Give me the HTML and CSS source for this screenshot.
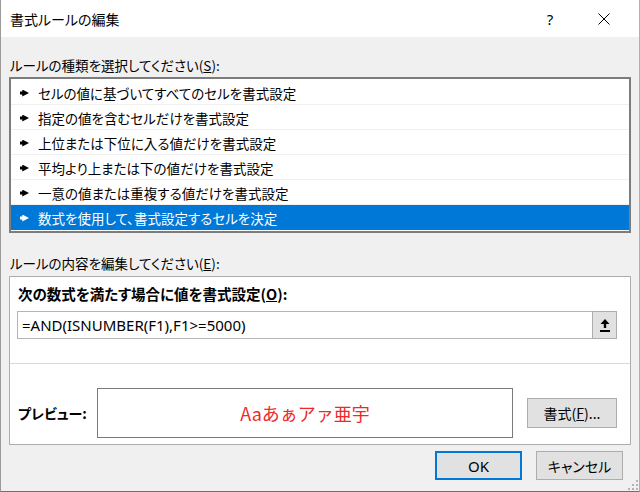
FILE: index.html
```html
<!DOCTYPE html>
<html lang="ja">
<head>
    <meta charset="UTF-8">
    <title>書式ルールの編集</title>
    <link rel="stylesheet" href="styles.css">
</head>
<body>

<div class="dialog">
    <div class="titlebar">
        <span class="title">書式ルールの編集</span>
        <span class="help">?</span>
        <span class="close">
            <svg width="12" height="12" viewBox="0 0 12 12"><path d="M0.5 0.5L11.5 11.5M11.5 0.5L0.5 11.5" stroke="#000" stroke-width="1"/></svg>
        </span>
    </div>

    <div class="content">
        <div class="label">ルールの種類を選択してください(<u>S</u>):</div>
        <ul class="rule-list">
            <li><i class="pointer"></i>セルの値に基づいてすべてのセルを書式設定</li>
            <li><i class="pointer"></i>指定の値を含むセルだけを書式設定</li>
            <li><i class="pointer"></i>上位または下位に入る値だけを書式設定</li>
            <li><i class="pointer"></i>平均より上または下の値だけを書式設定</li>
            <li><i class="pointer"></i>一意の値または重複する値だけを書式設定</li>
            <li class="selected"><i class="pointer"></i>数式を使用して、書式設定するセルを決定</li>
        </ul>

        <div class="label label-edit">ルールの内容を編集してください(<u>E</u>):</div>
        <div class="panel">
            <div class="panel-top">
                <div class="panel-title">次の数式を満たす場合に値を書式設定(<u>O</u>):</div>
                <div class="formula">
                    <div class="formula-text">=AND(ISNUMBER(F1),F1&gt;=5000)</div>
                    <button class="collapse">
                        <svg width="10" height="13" viewBox="0 0 10 13"><path d="M5 0L9.5 5H6.2V9H3.8V5H0.5Z" fill="#000"/><rect x="0" y="11" width="10" height="2" fill="#000"/></svg>
                    </button>
                </div>
            </div>
            <div class="panel-bottom">
                <span class="preview-label">プレビュー:</span>
                <div class="preview">Aaあぁアァ亜宇</div>
                <button class="btn btn-format">書式(<u>F</u>)...</button>
            </div>
        </div>

        <div class="actions">
            <button class="btn btn-ok">OK</button>
            <button class="btn">キャンセル</button>
        </div>
    </div>

    <svg class="grip" width="10" height="10" viewBox="0 0 10 10">
        <rect x="8" y="0" width="2" height="2" fill="#b5b5b5"/>
        <rect x="4" y="4" width="2" height="2" fill="#b5b5b5"/>
        <rect x="8" y="4" width="2" height="2" fill="#b5b5b5"/>
        <rect x="0" y="8" width="2" height="2" fill="#b5b5b5"/>
        <rect x="4" y="8" width="2" height="2" fill="#b5b5b5"/>
        <rect x="8" y="8" width="2" height="2" fill="#b5b5b5"/>
    </svg>
</div>

</body>
</html>
```

FILE: styles.css
```css
body {
    margin: 0;
    font-family: "Noto Sans CJK JP", sans-serif;
    font-feature-settings: "palt";
    font-size: 13.5px;
    color: #000;
}
.dialog {
    position: relative;
    width: 640px;
    height: 492px;
    box-sizing: border-box;
    background-color: #f0f0f0;
    border-left: 1px solid #9a9a9a;
    border-right: 1px solid #b0b0b0;
    border-bottom: 1px solid #707070;
    display: flex;
    flex-direction: column;
}
.titlebar {
    height: 37px;
    background-color: #fff;
    display: flex;
    align-items: center;
    padding-left: 9px;
    padding-right: 12px;
}
.title {
    flex: 1;
    font-size: 14px;
}
.help, .close {
    width: 46px;
    display: flex;
    justify-content: center;
    align-items: center;
}
.help {
    font-family: "Noto Sans", sans-serif;
    font-size: 15px;
    margin-right: 8px;
}
.content {
    flex: 1;
    padding: 18px 8px 0 8px;
    display: flex;
    flex-direction: column;
}
.label {
    line-height: 20px;
    padding-left: 1px;
}
.label-edit {
    margin-top: 20px;
}
.rule-list {
    list-style: none;
    margin: 2px 0 0;
    padding: 1px 0;
    background-color: #fff;
    border: 2px solid #7c7c7c;
}
.rule-list li {
    height: 25px;
    box-sizing: border-box;
    padding: 2px 0 0 9px;
    border-bottom: 1px solid #f0f0f0;
    display: flex;
    align-items: center;
}
.rule-list li.selected {
    background-color: #0078d7;
    border-bottom-color: #0078d7;
    color: #fff;
}
.pointer {
    width: 9px;
    height: 7px;
    margin-right: 9px;
    background-color: #000;
    clip-path: polygon(0 30%, 25% 30%, 25% 0, 100% 50%, 25% 100%, 25% 70%, 0 70%);
}
.selected .pointer {
    background-color: #fff;
}
.panel {
    margin-top: 3px;
    background-color: #fff;
    border: 1px solid #adadad;
}
.panel-top {
    padding: 7px 13px 24px 7px;
    border-bottom: 1px solid #dadada;
}
.panel-title {
    font-weight: bold;
    font-size: 14.5px;
    line-height: 20px;
    padding-left: 1px;
    margin-bottom: 7px;
}
.formula {
    display: flex;
    height: 28px;
}
.formula-text {
    flex: 1;
    border: 1px solid #b4b4b4;
    border-right: none;
    padding-left: 4px;
    font-family: "Noto Sans", sans-serif;
    font-feature-settings: normal;
    font-size: 15px;
    line-height: 26px;
}
.collapse {
    width: 25px;
    height: 28px;
    padding: 0;
    border: 1px solid #adadad;
    background-color: #e1e1e1;
    display: flex;
    align-items: center;
    justify-content: center;
}
.panel-bottom {
    display: flex;
    align-items: center;
    padding: 24px 13px 6px 8px;
}
.preview-label {
    width: 79px;
    font-weight: bold;
    font-size: 14px;
}
.preview {
    flex: 1;
    height: 50px;
    box-sizing: border-box;
    border: 1px solid #7a7a7a;
    display: flex;
    align-items: center;
    justify-content: center;
    color: #f02828;
    font-size: 18px;
    font-feature-settings: normal;
}
.btn {
    height: 29px;
    box-sizing: border-box;
    border: 1px solid #adadad;
    background-color: #e1e1e1;
    font-family: "Noto Sans CJK JP", sans-serif;
    font-feature-settings: "palt";
    font-size: 14px;
    color: #000;
    padding: 0;
}
.btn-format {
    width: 90px;
    height: 30px;
    margin-left: 14px;
}
.actions {
    display: flex;
    justify-content: flex-end;
    gap: 14px;
    margin-top: 6px;
    margin-right: 8px;
}
.actions .btn {
    width: 87px;
}
.btn-ok {
    border: 2px solid #0078d7;
    font-family: "Noto Sans", sans-serif;
    font-size: 15px;
}
.grip {
    position: absolute;
    right: 1px;
    bottom: 1px;
}
```
